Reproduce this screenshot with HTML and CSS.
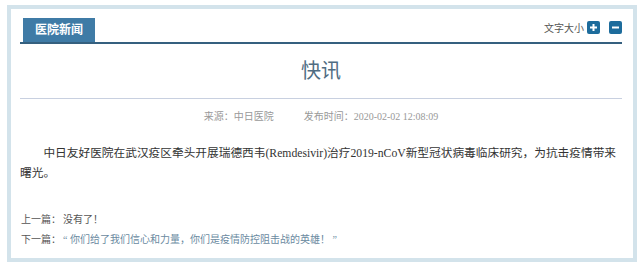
FILE: index.html
```html
<!DOCTYPE html>
<html>
<head>
    <meta charset="UTF-8">
    <title>快讯</title>
    <link rel="stylesheet" href="styles.css">
</head>
<body>
    <div class="frame">
        <div class="header">
            <div class="tab">医院新闻</div>
            <div class="font-size">
                <span class="label">文字大小</span>
                <button class="size-btn">
                    <svg width="9" height="9" viewBox="0 0 9 9"><path d="M4.5 1v7M1 4.5h7" stroke="#fff" stroke-width="2"/></svg>
                </button>
                <button class="size-btn">
                    <svg width="9" height="9" viewBox="0 0 9 9"><path d="M1 4.5h7" stroke="#fff" stroke-width="2"/></svg>
                </button>
            </div>
        </div>

        <h1 class="title">快讯</h1>

        <div class="meta">
            <span>来源：中日医院</span>
            <span>发布时间：2020-02-02 12:08:09</span>
        </div>

        <p class="article">中日友好医院在武汉疫区牵头开展瑞德西韦(Remdesivir)治疗2019-nCoV新型冠状病毒临床研究，为抗击疫情带来曙光。</p>

        <div class="pager">
            <div class="pager-row"><span class="pager-label">上一篇：</span><span>没有了！</span></div>
            <div class="pager-row"><span class="pager-label">下一篇：</span><a class="pager-link" href="#">“ 你们给了我们信心和力量，你们是疫情防控阻击战的英雄！ ”</a></div>
        </div>
    </div>
</body>
</html>
```

FILE: styles.css
```css
body {
    margin: 0;
    background: #fff;
    font-family: "Liberation Serif", "Noto Sans CJK SC", serif;
    color: #333;
}

.frame {
    box-sizing: border-box;
    width: 630px;
    height: 257px;
    margin: 5px 0 0 7px;
    border: 4px solid #d3e3eb;
    padding: 0 11px 0 9px;
    background: #fff;
}

.header {
    display: flex;
    justify-content: space-between;
    align-items: flex-end;
    margin-top: 9px;
    border-bottom: 2px solid #35607f;
}

.tab {
    margin-left: 3px;
    height: 24px;
    line-height: 24px;
    padding: 0 12px;
    background: #3f7ba6;
    color: #fff;
    font-size: 12px;
    font-weight: bold;
}

.font-size {
    display: flex;
    align-items: center;
    margin-bottom: 7px;
}

.font-size .label {
    font-size: 10px;
    color: #555;
    margin-right: 3px;
}

.size-btn {
    display: flex;
    align-items: center;
    justify-content: center;
    width: 13px;
    height: 13px;
    padding: 0;
    margin-left: 9px;
    border: none;
    border-radius: 2px;
    background: #1d6c9c;
}

.size-btn:first-of-type {
    margin-left: 0;
}

.title {
    margin: 12px 0 0 0;
    padding-bottom: 12px;
    line-height: 30px;
    font-size: 20px;
    font-weight: normal;
    color: #4f6c82;
    text-align: center;
    border-bottom: 1px solid #c8d0e0;
}

.meta {
    display: flex;
    justify-content: center;
    gap: 30px;
    margin-top: 10px;
    line-height: 16px;
    font-size: 10px;
    color: #999;
}

.article {
    margin: 19px 0 0 0;
    line-height: 20px;
    font-size: 11.7px;
    text-indent: 2em;
    color: #333;
}

.pager {
    margin-top: 26px;
    margin-left: 1px;
    font-size: 10px;
    color: #555;
}

.pager-row {
    line-height: 20px;
}

.pager-label {
    display: inline-block;
    width: 42px;
}

.pager-link {
    color: #6b8a9f;
    text-decoration: none;
}
```
